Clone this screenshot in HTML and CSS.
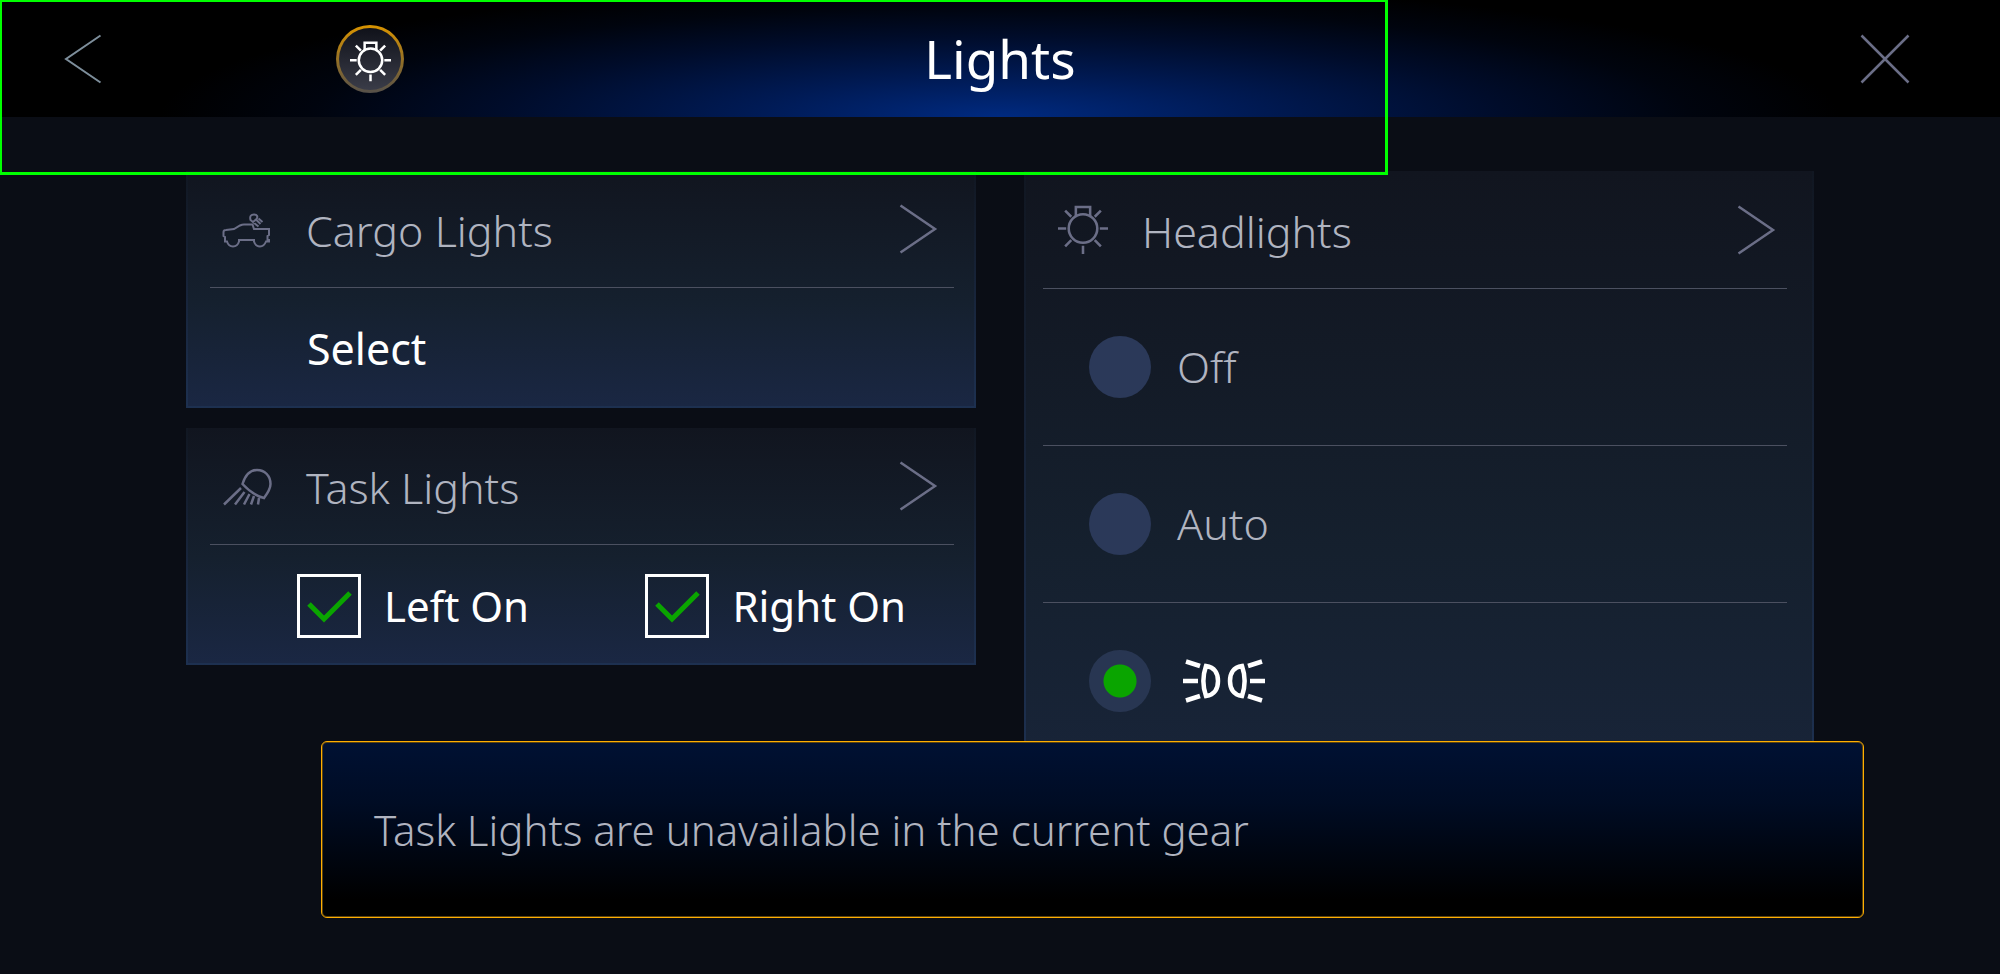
FILE: index.html
```html
<!DOCTYPE html>
<html lang="en">
<head>
<meta charset="utf-8">
<title>Lights</title>
<link rel="stylesheet" href="styles.css">
</head>
<body>
<svg class="defs" aria-hidden="true">
  <symbol id="bulb" viewBox="0 0 49 49">
    <circle cx="24.500" cy="23" r="14"/>
    <path d="M17.500 11V2H31.500V11M0 23H8M41 23H49M24.500 40V48M7 5.500L13 11.500M42 5.500L36 11.500M7 40.500L13 34.500M42 40.500L36 34.500"/>
  </symbol>
  <symbol id="chevron" viewBox="0 0 39 50">
    <path d="M1.500 1.500L36 25L1.500 48.500"/>
  </symbol>
</svg>
<header class="topbar">
  <button class="icon-btn back" aria-label="Back"><svg class="chevron flip"><use href="#chevron"/></svg></button>
  <div class="badge"><svg class="bulb-small"><use href="#bulb"/></svg></div>
  <h1 class="title">Lights</h1>
  <button class="icon-btn close" aria-label="Close">
    <svg class="cross" viewBox="0 0 50 50"><path d="M1.500 1.500L48.500 48.500M48.500 1.500L1.500 48.500"/></svg>
  </button>
</header>
<div class="focus-frame"></div>

<main class="content">
  <div class="column">
    <section class="card">
      <button class="card-head">
        <svg class="card-icon truck" viewBox="0 0 50 50">
          <path d="M5 37.500H3V33L1.500 32V28Q1.500 26 4 26L12 25L18 21.500Q20 20.500 22 20.500H30.500L32 25H47V31L45.500 32V36H47V37.500H44Q42 42.500 38 42.500Q33.500 42.500 32 37.500V36H17V37.500Q15.500 42.500 11 42.500Q6.500 42.500 5 37.500Z"/>
          <path d="M28.500 16C27.500 12 29 10.500 32 10.500C35.500 10.500 36 13 34.500 15L31 18ZM31.500 18.500L36.500 22.500M34.500 16L38.500 20M36.500 14.500L40.500 18"/>
        </svg>
        <span class="card-title">Cargo Lights</span>
        <svg class="chevron"><use href="#chevron"/></svg>
      </button>
      <div class="card-body">
        <button class="select-btn">Select</button>
      </div>
    </section>
    <section class="card">
      <button class="card-head">
        <svg class="card-icon" viewBox="0 0 50 50">
          <path d="M20.500 23C23 15 28 9 35 9C43 9 48.500 15 48.500 23C48.500 28 45 33 42 37C34 35 27 30 20.500 23ZM19 27L2 43.500M22.500 31L13 43.500M27.500 33L22 43.500M32 35L29 43.500M37 37L36 43.500"/>
        </svg>
        <span class="card-title">Task Lights</span>
        <svg class="chevron"><use href="#chevron"/></svg>
      </button>
      <div class="card-body checks">
        <label class="check"><input type="checkbox" checked><svg class="tick" viewBox="0 0 64 64"><path d="M12 30L27 45L53 19"/></svg><span>Left On</span></label>
        <label class="check"><input type="checkbox" checked><svg class="tick" viewBox="0 0 64 64"><path d="M12 30L27 45L53 19"/></svg><span>Right On</span></label>
      </div>
    </section>
  </div>

  <section class="card tall">
    <button class="card-head">
      <svg class="card-icon"><use href="#bulb"/></svg>
      <span class="card-title">Headlights</span>
      <svg class="chevron"><use href="#chevron"/></svg>
    </button>
    <label class="option"><input type="radio" name="headlights"><span>Off</span></label>
    <label class="option"><input type="radio" name="headlights"><span>Auto</span></label>
    <label class="option"><input type="radio" name="headlights" checked aria-label="Parking lights">
      <svg class="parking" viewBox="0 0 84 46">
        <path d="M24 8C33 9 36 16 36 23C36 30 33 37 24 38C20.500 28 20.500 18 24 8ZM60 8C51 9 48 16 48 23C48 30 51 37 60 38C63.500 28 63.500 18 60 8ZM1 23H16M68 23H83M4 3.500L18 8M4 42.500L18 38M80 3.500L66 8M80 42.500L66 38"/>
      </svg>
    </label>
  </section>
</main>

<div class="toast" role="status">Task Lights are unavailable in the current gear</div>
</body>
</html>
```
FILE: styles.css
```css
* { box-sizing: border-box; }

body {
  margin: 0;
  min-height: 100vh;
  position: relative;
  background: #0a0d15;
  color: #b0b4c0;
  font-family: "Noto Sans", "Open Sans", sans-serif;
  font-size: 43px;
  font-weight: 300;
  line-height: 60px;
}

button {
  padding: 0;
  border: 0;
  background: none;
  color: inherit;
  font: inherit;
  text-align: left;
}

svg { flex: none; fill: none; stroke: #6b6e87; stroke-width: 2.5; }
.defs { display: none; }

.topbar {
  display: grid;
  grid-template-columns: 336px 1fr auto 1fr 336px;
  align-items: center;
  height: 117px;
  background: radial-gradient(ellipse 42% 115% at 50% 100%, #002a80 0%, #001a54 30%, #000c2a 60%, #00040e 82%, #000 100%) #000;
}

.icon-btn { display: flex; }
.back { padding-left: 63px; }
.back svg { stroke: #7d8e9b; stroke-width: 2; }
.close { grid-column: 5; justify-self: end; padding-right: 90px; }
.chevron { width: 39px; height: 50px; }
.flip { transform: rotate(180deg); }
.cross { width: 50px; height: 50px; }

.badge {
  display: flex;
  align-items: center;
  justify-content: center;
  width: 68px;
  height: 68px;
  padding-top: 6px;
  border: 3px solid transparent;
  border-radius: 50%;
  background: linear-gradient(#10121a, #3a3c48) padding-box, linear-gradient(#d99400, #55504a) border-box;
}
.bulb-small { width: 41px; height: 41px; stroke: #fff; stroke-width: 3; }

.title {
  margin: 0;
  color: #fff;
  font-size: 53px;
  font-weight: 400;
}

.focus-frame {
  position: absolute;
  top: 0;
  left: 0;
  z-index: 2;
  width: 1388px;
  height: 175px;
  border: 3px solid #0f0;
  border-width: 2px 3px 3px 2px;
  pointer-events: none;
}

.content {
  display: grid;
  grid-template-columns: 1fr 1fr;
  gap: 48px;
  align-items: start;
  padding: 54px 186px 0;
}
.column { display: grid; gap: 20px; }

.card {
  border: 2px solid;
  border-top: 0;
  border-image: linear-gradient(#111722, #1d3050) 1;
  background: linear-gradient(#11151f, #15202e 55%, #1a2743);
}
.card-head {
  display: flex;
  align-items: center;
  gap: 34px;
  width: calc(100% - 42px);
  height: 117px;
  margin-left: 22px;
  padding: 0 16px 0 12px;
  border-bottom: 1px solid #4b5060;
}
.card-icon { width: 50px; height: 50px; }
.truck { stroke-width: 2; }
.card-title { flex: 1; padding-top: 4px; }
.card-body {
  display: flex;
  align-items: center;
  height: 118px;
  padding: 4px 68px 0 119px;
  color: #fff;
  font-size: 42px;
  font-weight: 400;
}
.select-btn { font-size: 43px; }
.checks { justify-content: space-between; padding-left: 109px; }
.check { display: flex; align-items: center; gap: 23px; position: relative; }
.check input {
  appearance: none;
  width: 64px;
  height: 64px;
  margin: 0;
  border: 3px solid #fff;
}
.tick {
  position: absolute;
  left: 0;
  width: 64px;
  height: 64px;
  stroke: #0aa500;
  stroke-width: 5;
}
.check input:not(:checked) + .tick { display: none; }

.tall { background: linear-gradient(#11151f, #131a26 30%, #15202e 65%, #182438); }
.tall .card-head, .option { margin: 0 25px 0 17px; }
.tall .card-head { height: 118px; padding-left: 15px; padding-right: 11px; }
.option {
  display: flex;
  align-items: center;
  gap: 26px;
  height: 157px;
  padding-left: 46px;
  border-bottom: 1px solid #4b5060;
}
.option:last-child { height: 155px; border: 0; }
.option input {
  appearance: none;
  width: 62px;
  height: 62px;
  margin: 0;
  border-radius: 50%;
  background: #2b3959;
}
.option input:checked { background: radial-gradient(circle, #0aa500 16px, #283652 17px); }
.parking { width: 84px; height: 46px; margin-left: 5px; stroke: #fff; stroke-width: 4.5; }

.toast {
  position: absolute;
  top: 741px;
  left: 321px;
  right: 136px;
  z-index: 1;
  padding: 58px 52px 57px;
  border: 1px solid #ffae00;
  border-radius: 6px;
  background: linear-gradient(#001133, #000c24 35%, #000 90%);
  box-shadow: inset 0 0 0 1px #5a4310;
  font-size: 42px;
}
```
